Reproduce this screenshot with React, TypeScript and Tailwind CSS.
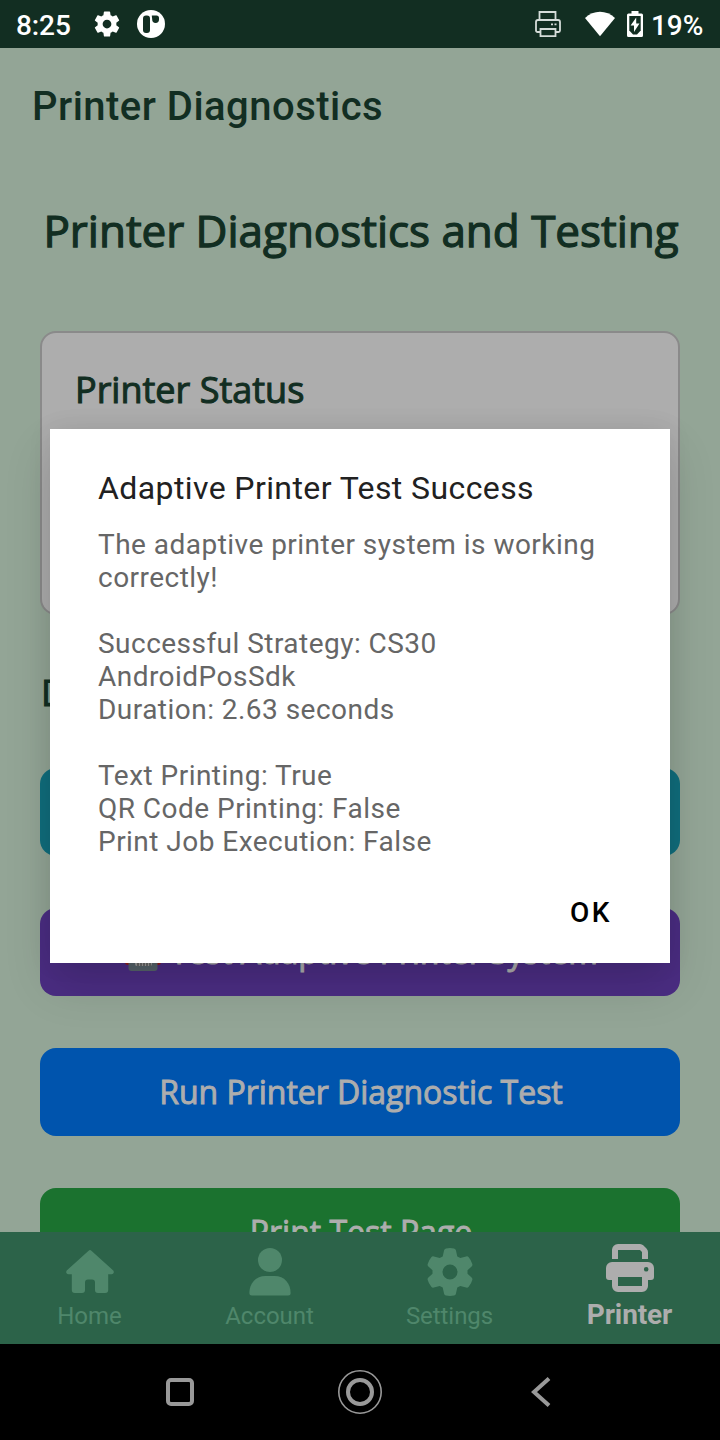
import type { ReactNode } from "react";

const openSans = "font-['Open_Sans',sans-serif] font-normal";

function StatusBar() {
  return (
    <div className="flex h-12 shrink-0 items-center bg-[#122e22] text-white">
      <span className="ml-4 mt-[3px] w-[56px] text-[28px] font-medium leading-8 tracking-[-0.1px]">8:25</span>
      <svg className="ml-[20px]" width="30" height="30" viewBox="0 0 24 24" fill="#fff">
        <path d="M19.43 12.98c.04-.32.07-.64.07-.98s-.03-.66-.07-.98l2.11-1.65c.19-.15.24-.42.12-.64l-2-3.46c-.12-.22-.39-.3-.61-.22l-2.49 1c-.52-.4-1.08-.73-1.69-.98l-.38-2.65C14.46 2.18 14.25 2 14 2h-4c-.25 0-.46.18-.49.42l-.38 2.65c-.61.25-1.17.59-1.69.98l-2.49-1c-.23-.09-.49 0-.61.22l-2 3.46c-.13.22-.07.49.12.64l2.11 1.65c-.04.32-.07.65-.07.98s.03.66.07.98l-2.11 1.65c-.19.15-.24.42-.12.64l2 3.46c.12.22.39.3.61.22l2.49-1c.52.4 1.08.73 1.69.98l.38 2.65c.03.24.24.42.49.42h4c.25 0 .46-.18.49-.42l.38-2.65c.61-.25 1.17-.59 1.69-.98l2.49 1c.23.09.49 0 .61-.22l2-3.46c.12-.22.07-.49-.12-.64l-2.11-1.65zM12 15.500c-1.930 0-3.500-1.570-3.500-3.500s1.570-3.500 3.500-3.500 3.500 1.570 3.500 3.500-1.570 3.500-3.500 3.500z" />
      </svg>
      <svg className="ml-[15px]" width="28" height="28" viewBox="0 0 28 28">
        <circle cx="14" cy="14" r="14" fill="#fff" />
        <rect x="6" y="5.5" width="7" height="17.5" rx="3" fill="#122e22" />
        <path d="M14.800 5.500H19.500a2.500 2.500 0 0 1 2.500 2.500v1.500a3.400 3.400 0 0 1-6.800 0c0-1.600-.4-2.600-.4-4z" fill="#122e22" />
      </svg>
      <svg className="ml-auto" width="28" height="28" viewBox="0 0 28 28" fill="none" stroke="#d5dcd9" strokeWidth="1.800">
        <path d="M5.500 10V2h16v8M6 22H3.500A1.500 1.500 0 0 1 2 20.500V12a2 2 0 0 1 2-2h20a2 2 0 0 1 2 2v8.500a1.500 1.500 0 0 1-1.500 1.500H22M6.500 19h15v7.200h-15zM17 14.300h2M20.500 14.300h2" />
      </svg>
      <svg className="ml-[23px]" width="30" height="26" viewBox="0 0 30 26" fill="#fff">
        <path d="M0 7C8.500-1.300 21.500-1.300 30 7L15 25.200z" />
      </svg>
      <svg className="ml-[12px]" width="16" height="26" viewBox="0 0 16 26">
        <path d="M4.500 0h7v2.500H14.500A1.500 1.500 0 0 1 16 4v20.500a1.500 1.500 0 0 1-1.500 1.500h-13A1.500 1.500 0 0 1 0 24.500V4a1.500 1.500 0 0 1 1.500-1.500h3z" fill="#fff" />
        <path d="M2.300 5h11.400v14.500L10 23.500H6L2.300 19.500z" fill="#122e22" />
        <path d="M9.200 6.500v6h3.300L7 21v-6.500H3.600z" fill="#fff" />
      </svg>
      <span className="ml-[8px] mr-4 mt-[3px] w-[53px] text-[28px] font-medium leading-8 tracking-[-0.1px]">19%</span>
    </div>
  );
}

function RobotEmoji() {
  return (
    <svg className="mt-[4px]" width="38" height="38" viewBox="0 0 38 38">
      <rect x="1" y="19" width="36" height="11" rx="3" fill="#8f1d1a" />
      <rect x="4.500" y="6" width="29" height="30" rx="3" fill="#56636a" />
      <circle cx="13" cy="16" r="4" fill="#adadad" />
      <circle cx="26" cy="16" r="4" fill="#adadad" />
      <rect x="11" y="24" width="17" height="7" rx="2" fill="#9a9a9a" />
      <path d="M14 24v7M17 24v7M20 24v7M23 24v7M26 24v7" stroke="#333" strokeWidth="1" />
    </svg>
  );
}

function ActionButton({ color, children }: { color: string; children?: ReactNode }) {
  return (
    <button
      className={`${openSans} ${color} flex h-[88px] w-full shrink-0 items-center justify-center rounded-[16px] pl-[2px] text-[32px] leading-[44px] tracking-[-0.02px] text-[#adadad] [-webkit-text-stroke:0.95px_#adadad]`}
    >
      {children}
    </button>
  );
}

function Tab({ label, active, children }: { label: string; active?: boolean; children: ReactNode }) {
  return (
    <div className={`flex w-[180px] flex-col items-center ${active ? "text-[#adadad]" : "text-[#4f876b]"}`}>
      <svg className={active ? "mt-3" : "mt-4"} width="48" height="48" viewBox="0 0 48 48" fill="currentColor">
        {children}
      </svg>
      <span
        className={
          active
            ? "mt-[7px] pr-[1px] text-[28px] font-bold leading-8 tracking-[-0.1px]"
            : "mt-[6px] pr-[1px] text-[24px] leading-7 tracking-[-0.05px]"
        }
      >
        {label}
      </span>
    </div>
  );
}

function TabBar() {
  return (
    <nav className="flex h-[112px] shrink-0 bg-[#2c6349]">
      <Tab label="Home">
        <path d="M22.600 2.700a2 2 0 0 1 2.800 0L47 22.200c1.600 1.500.8 4.100-1.400 4.100H42.200V42a3 3 0 0 1-3 3H32a3 3 0 0 1-3-3v-7.500a3 3 0 0 0-3-3h-4a3 3 0 0 0-3 3V42a3 3 0 0 1-3 3H8.800a3 3 0 0 1-3-3V26.300H2.400C.2 26.300-.6 23.700 1 22.200z" />
      </Tab>
      <Tab label="Account">
        <circle cx="24" cy="12" r="12" />
        <path d="M19.500 28h9C38.500 28 44.600 35.500 44.600 45a2.500 2.500 0 0 1-2.500 2.500H5.900A2.500 2.500 0 0 1 3.400 45C3.400 35.500 9.500 28 19.500 28z" />
      </Tab>
      <Tab label="Settings">
        <path
          fillRule="evenodd"
          d="M20 .5Q24-.3 28 .5Q29.600.9 29.900 2.300L31.300 8.400L34.300 10.100L40.100 8.400Q41.700 7.900 42.700 9.200Q45.300 12.300 46.300 15.900Q46.700 17.300 45.600 18.400L41.500 22.300V25.700L45.600 29.600Q46.700 30.700 46.300 32.100Q45.300 35.700 42.700 38.800Q41.700 40.100 40.100 39.600L34.300 37.900L31.300 39.600L29.900 45.700Q29.600 47.100 28 47.500Q24 48.300 20 47.500Q18.400 47.100 18.100 45.700L16.700 39.600L13.700 37.900L7.900 39.600Q6.300 40.100 5.300 38.800Q2.700 35.700 1.700 32.100Q1.300 30.700 2.400 29.600L6.500 25.700V22.300L2.400 18.400Q1.300 17.300 1.700 15.900Q2.700 12.300 5.300 9.200Q6.300 7.900 7.900 8.400L13.700 10.100L16.700 8.400L18.100 2.300Q18.400.9 20 .5ZM24 16.500a7.500 7.500 0 1 0 0 15a7.500 7.500 0 0 0 0-15Z"
        />
      </Tab>
      <Tab label="Printer" active>
        <path d="M6 15V6a6 6 0 0 1 6-6h22q2 0 3.500 1.500L40.500 4.500Q42 6 42 8v7h-6V8l-2-2H12v9z" />
        <path
          fillRule="evenodd"
          d="M6 18h36a6 6 0 0 1 6 6v9a3 3 0 0 1-3 3h-3v6a6 6 0 0 1-6 6H12a6 6 0 0 1-6-6v-6H3a3 3 0 0 1-3-3v-9a6 6 0 0 1 6-6zM12 33v9h24v-9zM40.200 23a2.300 2.300 0 1 0 0 4.600a2.300 2.300 0 0 0 0-4.600z"
        />
      </Tab>
    </nav>
  );
}

function SystemNav() {
  return (
    <div className="flex h-24 shrink-0 items-center justify-center bg-black">
      <svg width="180" height="48" viewBox="0 0 180 48" fill="none" stroke="#999" strokeWidth="4">
        <rect x="78" y="12" width="24" height="24" rx="3" />
      </svg>
      <svg width="180" height="48" viewBox="0 0 180 48" fill="none" stroke="#999">
        <circle cx="90" cy="24" r="21.200" strokeWidth="1.600" />
        <circle cx="90" cy="24" r="12" strokeWidth="4" />
      </svg>
      <svg width="180" height="48" viewBox="0 0 180 48" fill="none" stroke="#999" strokeWidth="4">
        <path d="M99 10.500L84 24l15 13.500" />
      </svg>
    </div>
  );
}

function ResultDialog() {
  return (
    <div
      role="dialog"
      className="absolute left-[50px] top-[429px] flex h-[534px] w-[620px] flex-col bg-white px-12 shadow-[0_22px_44px_rgba(0,0,0,0.14),0_0_24px_rgba(0,0,0,0.07)]"
    >
      <h2 className="mt-[40px] whitespace-nowrap text-[32px] font-normal leading-[38px] tracking-[0.4px] text-[#212121]">
        Adaptive Printer Test Success
      </h2>
      <p className="mt-[21px] whitespace-pre text-[28px] leading-[33px] tracking-[0.47px] text-[#666]">
        {`The adaptive printer system is working
correctly!

Successful Strategy: CS30
AndroidPosSdk
Duration: 2.63 seconds

Text Printing: True
QR Code Printing: False
Print Job Execution: False`}
      </p>
      <button className="mr-[10px] mt-[38px] self-end text-[28px] font-medium leading-[33px] tracking-[2.5px] text-black">
        OK
      </button>
    </div>
  );
}

export default function App() {
  return (
    <div className="relative flex h-[1440px] w-[720px] flex-col overflow-hidden bg-[#93a596] font-['Roboto',sans-serif] text-[#122e22]">
      <StatusBar />
      <header className="flex h-[112px] shrink-0 items-center px-8">
        <h1 className="mt-[6px] whitespace-nowrap text-[40px] font-medium leading-[48px] tracking-[0.48px]">Printer Diagnostics</h1>
      </header>
      <main className="flex min-h-0 flex-1 flex-col overflow-hidden px-10 pt-10">
        <h2 className={`${openSans} shrink-0 whitespace-nowrap pl-[2px] text-center text-[44px] leading-[60px] tracking-[-0.02px] [-webkit-text-stroke:1.25px_#122e22]`}>
          Printer Diagnostics and Testing
        </h2>
        <section className="mt-[71px] h-[284px] shrink-0 rounded-[16px] border-2 border-[#8a8a8a] bg-[#adadad] pl-[33px] pr-8 pt-[32px]">
          <h3 className={`${openSans} text-[36px] leading-[49px] [-webkit-text-stroke:1.05px_#122e22]`}>Printer Status</h3>
        </section>
        <h3 className={`${openSans} mt-[53px] h-[48px] shrink-0 pl-[1px] text-[36px] leading-[49px] [-webkit-text-stroke:1.05px_#122e22]`}>
          Diagnostic Tests
        </h3>
        <div className="mt-[52px] flex flex-col gap-[52px]">
          <ActionButton color="bg-[#106e7d]" />
          <ActionButton color="bg-[#4b2d83]">
            <RobotEmoji />
            <span className="ml-[8px] whitespace-nowrap">Test Adaptive Printer System</span>
          </ActionButton>
          <ActionButton color="bg-[#0054ad]">Run Printer Diagnostic Test</ActionButton>
          <ActionButton color="bg-[#1b722f]">Print Test Page</ActionButton>
        </div>
      </main>
      <TabBar />
      <SystemNav />
      <ResultDialog />
    </div>
  );
}
